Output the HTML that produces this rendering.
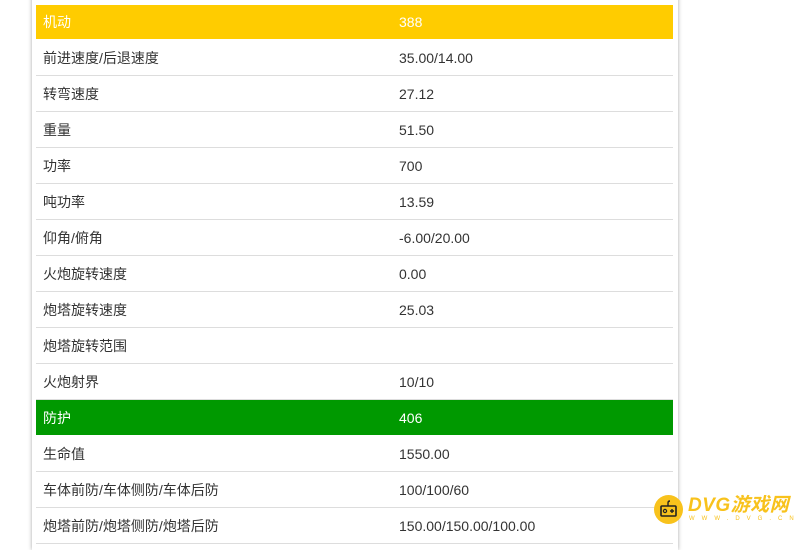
<!DOCTYPE html>
<html><head><meta charset="utf-8"><style>
body{margin:0;width:800px;height:535px;overflow:hidden;background:#fff;font-family:"Liberation Sans","Noto Sans CJK SC",sans-serif;position:relative}
.panel{position:absolute;left:32px;top:-10px;width:646px;height:560px;background:#fff;box-shadow:0 0 4px rgba(0,0,0,.35)}
table{position:absolute;left:36px;top:5px;width:637px;border-collapse:collapse}
td{height:35px;padding:0 0 0 7px;font-size:14px;color:#333;border-bottom:1px solid #ddd;vertical-align:middle}
td:first-child{width:349px}
tr.y td{background:#ffcc00;color:#fff;border-bottom:1px solid #fff;height:34px}
tr.g td{background:#009900;color:#fff;border-bottom:1px solid #fff}
.logo{position:absolute;left:654px;top:495px;width:29px;height:29px;border-radius:50%;background:#f8c21c}
.lt{position:absolute;left:688px;top:490px;font-size:19px;font-weight:bold;font-style:italic;color:#f8c21c;letter-spacing:0.5px}
.ls{position:absolute;left:689px;top:516px;font-size:6px;color:#f8c21c;letter-spacing:7px}
</style></head><body>
<div class="panel"></div>
<table>
<tr class="y"><td>机动</td><td>388</td></tr>
<tr><td>前进速度/后退速度</td><td>35.00/14.00</td></tr>
<tr><td>转弯速度</td><td>27.12</td></tr>
<tr><td>重量</td><td>51.50</td></tr>
<tr><td>功率</td><td>700</td></tr>
<tr><td>吨功率</td><td>13.59</td></tr>
<tr><td>仰角/俯角</td><td>-6.00/20.00</td></tr>
<tr><td>火炮旋转速度</td><td>0.00</td></tr>
<tr><td>炮塔旋转速度</td><td>25.03</td></tr>
<tr><td>炮塔旋转范围</td><td></td></tr>
<tr><td>火炮射界</td><td>10/10</td></tr>
<tr class="g"><td>防护</td><td>406</td></tr>
<tr><td>生命值</td><td>1550.00</td></tr>
<tr><td>车体前防/车体侧防/车体后防</td><td>100/100/60</td></tr>
<tr><td>炮塔前防/炮塔侧防/炮塔后防</td><td>150.00/150.00/100.00</td></tr>
</table>
<div class="logo"><svg width="29" height="29" viewBox="0 0 29 29"><rect x="7" y="11" width="15" height="10" rx="1" fill="none" stroke="#222" stroke-width="1.6"/><path d="M14 11 V8 Q14 6 16 6" fill="none" stroke="#222" stroke-width="1.4"/><circle cx="11" cy="16" r="1.6" fill="none" stroke="#222" stroke-width="1.2"/><path d="M16 16h4M18 14v4" stroke="#222" stroke-width="1.4"/></svg></div>
<div class="lt">DVG游戏网</div>
<div class="ls">WWW.DVG.CN</div>
</body></html>
